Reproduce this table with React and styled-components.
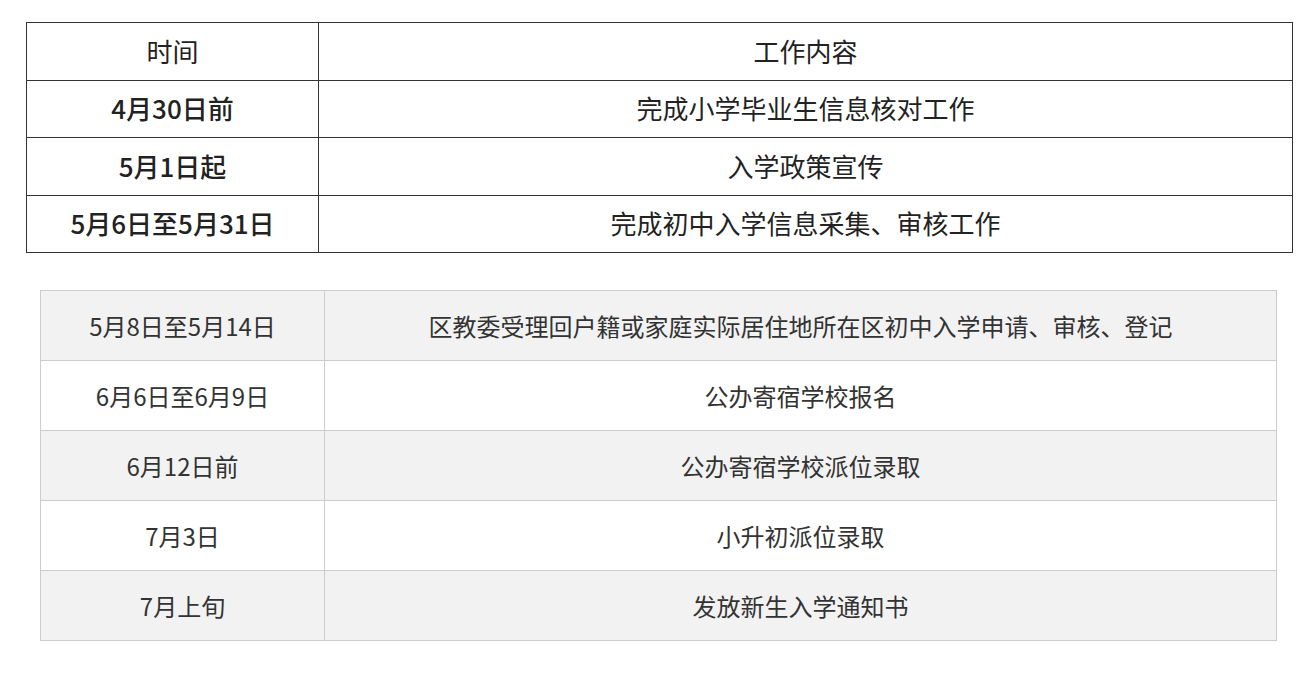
import React from "react";
import styled, { createGlobalStyle } from "styled-components";

const Global = createGlobalStyle`
  html, body { margin: 0; padding: 0; background: #fff; }
  body { font-family: "Microsoft YaHei", "Noto Sans CJK SC", "Noto Sans", sans-serif; }
`;

const Page = styled.div`
  padding: 22px 0 0 26px;
  display: flex;
  flex-direction: column;
  align-items: flex-start;
  gap: 37px;
`;

const PlanTable = styled.table`
  width: 1267px;
  border-collapse: collapse;
  table-layout: fixed;
  color: #222;
  font-size: 26px;
`;

const PlanRow = styled.tr`
  height: ${(p) => p.$h}px;
`;

const PlanCell = styled.td`
  border: 1px solid #333;
  padding: 0 0 2px;
  text-align: center;
  vertical-align: middle;
  font-weight: ${(p) => (p.$bold ? 500 : 400)};
  line-height: 1;
`;

const ScheduleTable = styled.table`
  margin-left: 14px;
  width: 1237px;
  border-collapse: collapse;
  table-layout: fixed;
  color: #333;
  font-size: 24px;
`;

const ScheduleRow = styled.tr`
  height: 70px;
  background: ${(p) => (p.$shade ? "#f2f2f2" : "#fff")};
`;

const ScheduleCell = styled.td`
  border: 1px solid #cccccc;
  padding: 0;
  text-align: center;
  vertical-align: middle;
  line-height: 1;
`;

const plan = [
  ["4月30日前", "完成小学毕业生信息核对工作"],
  ["5月1日起", "入学政策宣传"],
  ["5月6日至5月31日", "完成初中入学信息采集、审核工作"],
];

const schedule = [
  ["5月8日至5月14日", "区教委受理回户籍或家庭实际居住地所在区初中入学申请、审核、登记"],
  ["6月6日至6月9日", "公办寄宿学校报名"],
  ["6月12日前", "公办寄宿学校派位录取"],
  ["7月3日", "小升初派位录取"],
  ["7月上旬", "发放新生入学通知书"],
];

const heights = [58, 57, 58, 57];

export default function App() {
  return (
    <>
      <Global />
      <Page>
        <PlanTable>
          <colgroup>
            <col style={{ width: 292 }} />
            <col />
          </colgroup>
          <tbody>
            <PlanRow $h={heights[0]}>
              <PlanCell>时间</PlanCell>
              <PlanCell>工作内容</PlanCell>
            </PlanRow>
            {plan.map(([t, c], i) => (
              <PlanRow key={t} $h={heights[i + 1]}>
                <PlanCell $bold>{t}</PlanCell>
                <PlanCell>{c}</PlanCell>
              </PlanRow>
            ))}
          </tbody>
        </PlanTable>
        <ScheduleTable>
          <colgroup>
            <col style={{ width: 284 }} />
            <col />
          </colgroup>
          <tbody>
            {schedule.map(([t, c], i) => (
              <ScheduleRow key={t} $shade={i % 2 === 0}>
                <ScheduleCell>{t}</ScheduleCell>
                <ScheduleCell>{c}</ScheduleCell>
              </ScheduleRow>
            ))}
          </tbody>
        </ScheduleTable>
      </Page>
    </>
  );
}
